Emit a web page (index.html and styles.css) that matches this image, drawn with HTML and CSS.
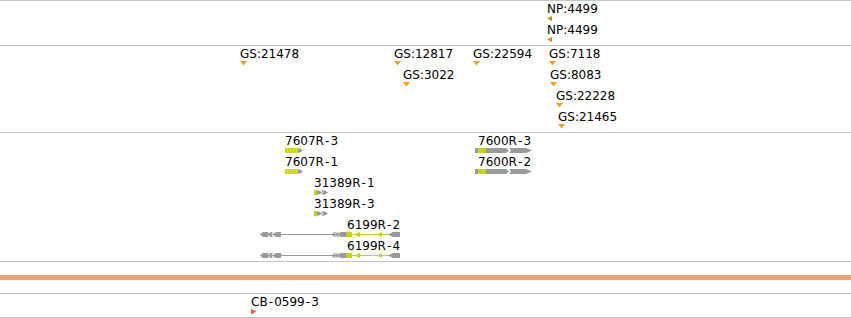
FILE: index.html
```html
<!DOCTYPE html>
<html>
<head>
<meta charset="utf-8">
<link rel="stylesheet" href="styles.css">
</head>
<body>
<div class="browser">
  <div class="track t1">
    <div class="feat" style="left:547px;top:1px">
      <span class="lbl">NP:4499</span>
      <svg class="glyph" width="6" height="6"><polygon class="np" points="0,2.5 5,0 5,5"/></svg>
    </div>
    <div class="feat" style="left:547px;top:22px">
      <span class="lbl">NP:4499</span>
      <svg class="glyph" width="6" height="6"><polygon class="np" points="0,2.5 5,0 5,5"/></svg>
    </div>
  </div>

  <div class="track t2">
    <div class="feat" style="left:240px;top:1px"><span class="lbl">GS:21478</span><svg class="glyph" width="7" height="5"><polygon class="gs" points="0,0 7,0 3.5,4.5"/></svg></div>
    <div class="feat" style="left:394px;top:1px"><span class="lbl">GS:12817</span><svg class="glyph" width="7" height="5"><polygon class="gs" points="0,0 7,0 3.5,4.5"/></svg></div>
    <div class="feat" style="left:403px;top:22px"><span class="lbl">GS:3022</span><svg class="glyph" width="7" height="5"><polygon class="gs" points="0,0 7,0 3.5,4.5"/></svg></div>
    <div class="feat" style="left:473px;top:1px"><span class="lbl">GS:22594</span><svg class="glyph" width="7" height="5"><polygon class="gs" points="0,0 7,0 3.5,4.5"/></svg></div>
    <div class="feat" style="left:549px;top:1px"><span class="lbl">GS:7118</span><svg class="glyph" width="7" height="5"><polygon class="gs" points="0,0 7,0 3.5,4.5"/></svg></div>
    <div class="feat" style="left:550px;top:22px"><span class="lbl">GS:8083</span><svg class="glyph" width="7" height="5"><polygon class="gs" points="0,0 7,0 3.5,4.5"/></svg></div>
    <div class="feat" style="left:556px;top:43px"><span class="lbl">GS:22228</span><svg class="glyph" width="7" height="5"><polygon class="gs" points="0,0 7,0 3.5,4.5"/></svg></div>
    <div class="feat" style="left:558px;top:64px"><span class="lbl">GS:21465</span><svg class="glyph" width="7" height="5"><polygon class="gs" points="0,0 7,0 3.5,4.5"/></svg></div>
  </div>

  <div class="track t3">
    <div class="feat" style="left:285px;top:1px">
      <span class="lbl">7607R<span class="hy">-</span>3</span>
      <svg class="glyph" width="19" height="5">
        <polygon class="cds" points="0,0 13,0 13,5 0,5"/>
        <path class="cut" d="M1.5,0 l1.5,2.5 l-1.5,2.5 M4.5,0 l1.5,2.5 l-1.5,2.5 M7.5,0 l1.5,2.5 l-1.5,2.5 M10.5,0 l1.5,2.5 l-1.5,2.5"/>
        <polygon class="utr" points="13,0.5 15,0.5 18,2.5 15,4.5 13,4.5"/>
      </svg>
    </div>
    <div class="feat" style="left:285px;top:22px">
      <span class="lbl">7607R<span class="hy">-</span>1</span>
      <svg class="glyph" width="19" height="5">
        <polygon class="cds" points="0,0 13,0 13,5 0,5"/>
        <path class="cut" d="M1.5,0 l1.5,2.5 l-1.5,2.5 M4.5,0 l1.5,2.5 l-1.5,2.5 M7.5,0 l1.5,2.5 l-1.5,2.5 M10.5,0 l1.5,2.5 l-1.5,2.5"/>
        <polygon class="utr" points="13,0.5 15,0.5 18,2.5 15,4.5 13,4.5"/>
      </svg>
    </div>
    <div class="feat" style="left:314px;top:43px">
      <span class="lbl">31389R<span class="hy">-</span>1</span>
      <svg class="glyph" width="15" height="5">
        <rect class="cds" x="0" y="0" width="3" height="5"/>
        <polygon class="utr" points="3,0.5 5,0.5 8,2.5 5,4.5 3,4.5"/>
        <polygon class="utr" points="7,0.5 11,0.5 14,2.5 11,4.5 7,4.5 9,2.5"/>
      </svg>
    </div>
    <div class="feat" style="left:314px;top:64px">
      <span class="lbl">31389R<span class="hy">-</span>3</span>
      <svg class="glyph" width="15" height="5">
        <rect class="cds" x="0" y="0" width="3" height="5"/>
        <polygon class="utr" points="3,0.5 5,0.5 8,2.5 5,4.5 3,4.5"/>
        <polygon class="utr" points="7,0.5 11,0.5 14,2.5 11,4.5 7,4.5 9,2.5"/>
      </svg>
    </div>
    <div class="feat" style="left:260px;top:85px">
      <span class="lbl off87">6199R<span class="hy">-</span>2</span>
      <svg class="glyph" width="143" height="5">
        <rect class="line-g" x="0" y="2" width="87" height="1"/>
        <polygon class="utr" points="0,2.5 3,0 8,0 8,5 3,5"/>
        <polygon class="utr" points="7,2.5 11,0 13,0 11,2.5 13,5 11,5"/>
        <polygon class="utr" points="12,2.5 16,0 21,0 21,5 16,5"/>
        <polygon class="utr" points="71,2.5 75,0 76,0 74,2.5 76,5 75,5"/>
        <polygon class="utr" points="74,2.5 78,0 79,0 77,2.5 79,5 78,5"/>
        <polygon class="utr" points="77,2.5 81,0 86,0 86,5 81,5"/>
        <rect class="cds" x="86" y="0" width="6" height="5"/>
        <rect class="line-y" x="92" y="2" width="37" height="1"/>
        <polygon class="cds" points="94,2.5 100,0 100,5"/>
        <polygon class="cds" points="117,2.5 122,0 122,5"/>
        <polygon class="utr" points="128,2.5 133,0 140,0 140,5 133,5"/>
      </svg>
    </div>
    <div class="feat" style="left:260px;top:106px">
      <span class="lbl off87">6199R<span class="hy">-</span>4</span>
      <svg class="glyph" width="143" height="5">
        <rect class="line-g" x="0" y="2" width="87" height="1"/>
        <polygon class="utr" points="0,2.5 3,0 8,0 8,5 3,5"/>
        <polygon class="utr" points="7,2.5 11,0 13,0 11,2.5 13,5 11,5"/>
        <polygon class="utr" points="12,2.5 16,0 21,0 21,5 16,5"/>
        <polygon class="utr" points="71,2.5 75,0 76,0 74,2.5 76,5 75,5"/>
        <polygon class="utr" points="74,2.5 78,0 79,0 77,2.5 79,5 78,5"/>
        <polygon class="utr" points="77,2.5 81,0 86,0 86,5 81,5"/>
        <rect class="cds" x="86" y="0" width="6" height="5"/>
        <rect class="line-y" x="92" y="2" width="37" height="1"/>
        <polygon class="cds" points="94,2.5 100,0 100,5"/>
        <polygon class="cds" points="117,2.5 122,0 122,5"/>
        <polygon class="utr" points="128,2.5 133,0 140,0 140,5 133,5"/>
      </svg>
    </div>
    <div class="feat" style="left:475px;top:1px">
      <span class="lbl off3">7600R<span class="hy">-</span>3</span>
      <svg class="glyph" width="58" height="5">
        <polygon class="utr" points="0,0 31,0 34,2.5 31,5 0,5"/>
        <rect class="cds" x="3" y="0" width="8" height="5"/>
        <polygon class="utr" points="34,0 51,0 57,2.5 51,5 34,5 36,2.5"/>
      </svg>
    </div>
    <div class="feat" style="left:475px;top:22px">
      <span class="lbl off3">7600R<span class="hy">-</span>2</span>
      <svg class="glyph" width="58" height="5">
        <polygon class="utr" points="0,0 31,0 34,2.5 31,5 0,5"/>
        <rect class="cds" x="3" y="0" width="8" height="5"/>
        <polygon class="utr" points="34,0 51,0 57,2.5 51,5 34,5 36,2.5"/>
      </svg>
    </div>
  </div>

  <div class="track t4">
    <div class="ruler"></div>
  </div>

  <div class="track t5">
    <div class="feat" style="left:251px;top:1px">
      <span class="lbl">CB<span class="hy">-</span>0599<span class="hy">-</span>3</span>
      <svg class="glyph" width="6" height="6"><polygon class="cb" points="0,0 5.5,2.5 0,5.5"/></svg>
    </div>
  </div>
</div>
</body>
</html>
```

FILE: styles.css
```css
html, body {
  margin: 0;
  padding: 0;
  background: #ffffff;
}

.browser {
  width: 851px;
  font-family: "DejaVu Sans", sans-serif;
  font-size: 12px;
  color: #000;
  border-bottom: 1px solid #c6c6c6;
}

.track {
  position: relative;
  border-top: 1px solid #c6c6c6;
}

.t1 { height: 44px; }
.t2 { height: 86px; }
.t3 { height: 128px; }
.t4 {
  height: 31px;
  display: flex;
  flex-direction: column;
}
.t5 { height: 23px; }

.ruler {
  margin-top: 13px;
  height: 5px;
  background: #f0a070;
}

.feat {
  position: absolute;
  display: flex;
  flex-direction: column;
  align-items: flex-start;
}

.lbl {
  display: block;
  height: 14px;
  line-height: 14px;
  white-space: nowrap;
}

.hy {
  padding: 0 1.1px;
}

.off87 { margin-left: 87px; }
.off3 { margin-left: 3px; }

.glyph {
  display: block;
  overflow: visible;
}

.gs { fill: #eea21e; }
.np { fill: #c8900e; }
.cb { fill: #f25c3a; }
.cds { fill: #c6d400; }
.utr { fill: #9a9a9a; }
.cut { fill: none; stroke: #e2ea60; stroke-width: 0.9; }
.line-g { fill: #9a9a9a; }
.line-y { fill: #c6d400; }
```
